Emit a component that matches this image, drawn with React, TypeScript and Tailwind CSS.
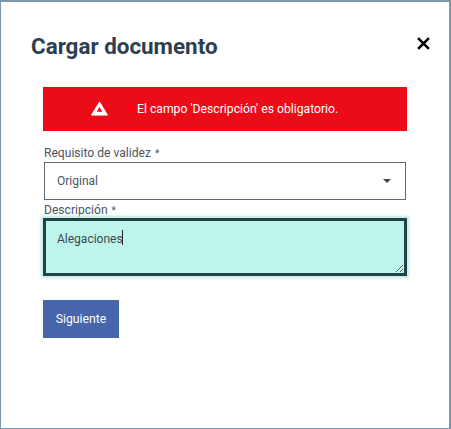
export default function App() {
  return (
    <div className="h-[429px] w-[451px] border-t-2 border-l border-r-2 border-b border-[#7f97ae] bg-white font-['Roboto',sans-serif] overflow-hidden">
      <header className="flex items-start justify-between pl-[30px] pr-[18px] pt-[29px]">
        <h1 className="text-[22.4px] leading-[30px] font-bold text-[#2c3e50]">Cargar documento</h1>
        <button className="mt-[4px] flex h-4 w-4 items-center justify-center text-black">
          <svg viewBox="0 0 12 12" className="h-[13px] w-[13px]" fill="none" stroke="currentColor" strokeWidth="2.4">
            <path d="M1 1l10 10M11 1L1 11" />
          </svg>
        </button>
      </header>

      <div className="ml-[42px] mr-[42px] mt-[26px]">
        <div className="flex h-11 items-center bg-[#ec0c17] pl-[48px] text-white">
          <svg viewBox="0 0 18 15" className="mb-[2px] h-[15px] w-[17px]">
            <path d="M9 0.5L17.5 14.5H0.5Z" fill="#fff" stroke="#fff" strokeLinejoin="round" />
            <path d="M9 6L12 11H6Z" fill="#ec0c17" />
          </svg>
          <span className="ml-[29px] text-[12.2px] leading-none">El campo 'Descripción' es obligatorio.</span>
        </div>

        <label className="mt-[14px] ml-px block text-[12.1px] leading-[17px] text-[#4a5560]">
          Requisito de validez <span className="ml-px text-[10px]">*</span>
        </label>
        <div className="mx-px flex h-[38px] items-center justify-between border border-[#5f6b75] bg-white pl-3 pr-[14px] text-[12px] text-[#4a5560]">
          <span>Original</span>
          <span className="h-0 w-0 border-x-[4px] border-t-[4px] border-x-transparent border-t-[#444]" />
        </div>

        <label className="mt-[3px] ml-px block h-[15px] text-[12.1px] leading-[15px] text-[#4a5560]">
          Descripción <span className="ml-px text-[10px]">*</span>
        </label>
        <div className="relative">
          <textarea
            readOnly
            value="Alegaciones"
            className="block h-[58px] w-full border-[3px] border-[#1f4347] bg-[#bdf5eb] px-[11px] pt-[10px] pb-1 text-[12px] leading-[17px] text-[#3a4a50] shadow-[0_0_3px_2px_#bdebe4] outline-none"
          />
          <span className="absolute left-[79px] top-[12px] h-[15px] w-px bg-[#222]" />
        </div>

        <button className="mt-6 h-[38px] w-[76px] bg-[#4665ab] text-[12.2px] font-normal text-white">Siguiente</button>
      </div>
    </div>
  );
}
